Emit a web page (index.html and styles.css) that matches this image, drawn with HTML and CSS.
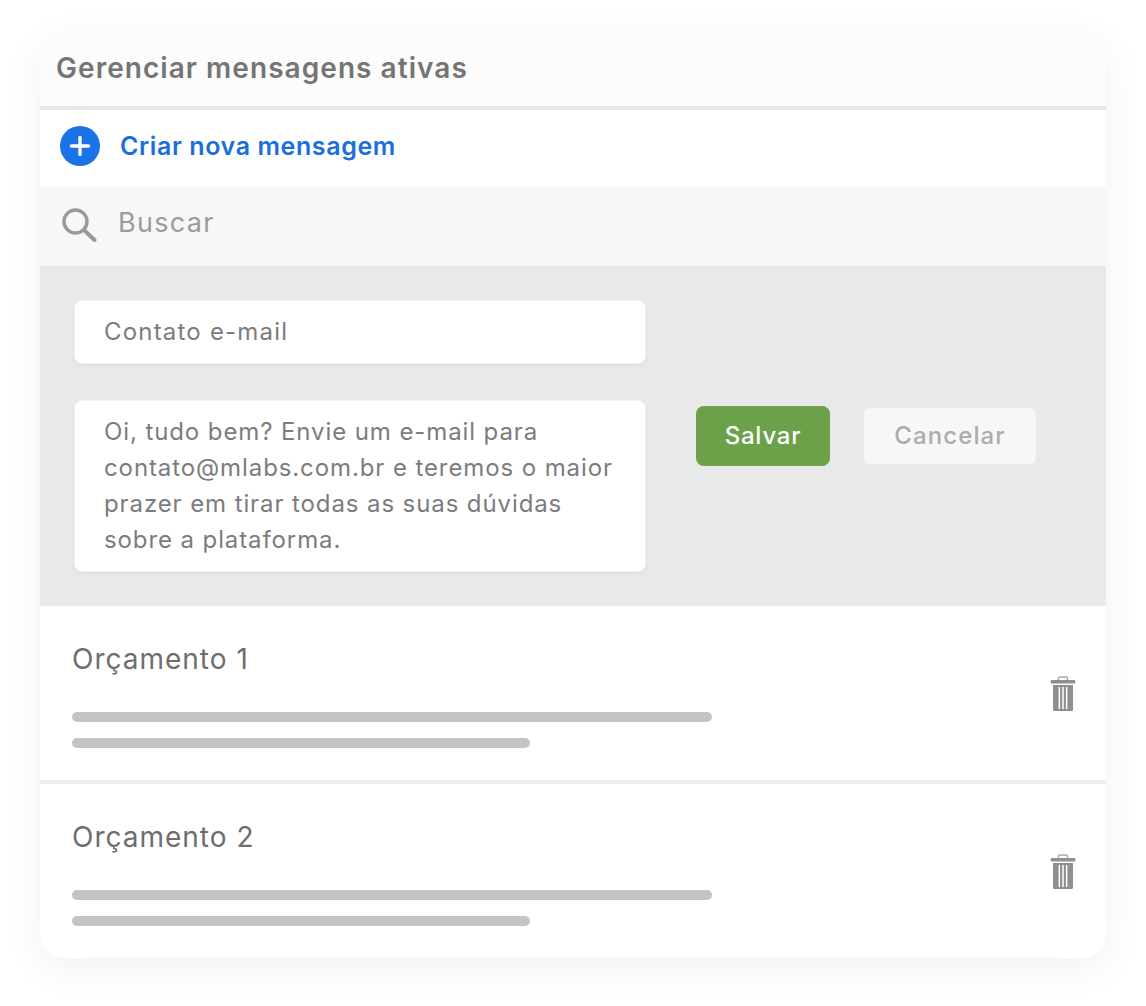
FILE: index.html
```html
<!DOCTYPE html>
<html lang="pt-BR">
<head>
  <meta charset="UTF-8">
  <title>Gerenciar mensagens ativas</title>
  <link rel="stylesheet" href="styles.css">
</head>
<body>
  <div class="card">
    <div class="card-title">Gerenciar mensagens ativas</div>
    <div class="create-row">
      <svg class="plus-icon" width="40" height="40" viewBox="0 0 40 40">
        <circle cx="20" cy="20" r="20" fill="#1a73e8"/>
        <path d="M20 11.5v17M11.5 20h17" stroke="#fff" stroke-width="3.4" stroke-linecap="round"/>
      </svg>
      <span class="create-label">Criar nova mensagem</span>
    </div>
    <div class="search-row">
      <svg class="search-icon" width="36" height="36" viewBox="0 0 36 36">
        <circle cx="14.5" cy="14.5" r="11.5" fill="none" stroke="#999" stroke-width="3.4"/>
        <path d="M23 23l10.5 10" stroke="#999" stroke-width="4" stroke-linecap="round"/>
      </svg>
      <span class="search-label">Buscar</span>
    </div>
    <div class="edit-panel">
      <div class="fields">
        <div class="field field-name">Contato e-mail</div>
        <div class="field field-body">Oi, tudo bem? Envie um e-mail para<br>contato@mlabs.com.br e teremos o maior<br>prazer em tirar todas as suas dúvidas<br>sobre a plataforma.</div>
      </div>
      <div class="actions">
        <button class="btn btn-save">Salvar</button>
        <button class="btn btn-cancel">Cancelar</button>
      </div>
    </div>
    <div class="message">
      <div class="message-text">
        <div class="message-name">Orçamento 1</div>
        <div class="line line-long"></div>
        <div class="line line-short"></div>
      </div>
      <svg class="trash-icon" width="26" height="36" viewBox="0 0 26 36">
        <path d="M8.500 4.500V2.500A1.500 1.500 0 0 1 10 1h6A1.500 1.500 0 0 1 17.500 2.500V4.500" fill="none" stroke="#a8a8a8" stroke-width="1.400"/>
        <rect x="0.500" y="4" width="25" height="3.600" rx="1.500" fill="#8f8f8f"/>
        <path fill="#8f8f8f" fill-rule="evenodd" d="M3 9h20V33.500a1.500 1.500 0 0 1-1.500 1.500H4.500A1.500 1.500 0 0 1 3 33.500ZM8.600 11v22h1.500V11ZM12.250 11v22h1.500V11ZM15.900 11v22h1.500V11Z"/>
      </svg>
    </div>
    <div class="message">
      <div class="message-text">
        <div class="message-name">Orçamento 2</div>
        <div class="line line-long"></div>
        <div class="line line-short"></div>
      </div>
      <svg class="trash-icon" width="26" height="36" viewBox="0 0 26 36">
        <path d="M8.500 4.500V2.500A1.500 1.500 0 0 1 10 1h6A1.500 1.500 0 0 1 17.500 2.500V4.500" fill="none" stroke="#a8a8a8" stroke-width="1.400"/>
        <rect x="0.500" y="4" width="25" height="3.600" rx="1.500" fill="#8f8f8f"/>
        <path fill="#8f8f8f" fill-rule="evenodd" d="M3 9h20V33.500a1.500 1.500 0 0 1-1.500 1.500H4.500A1.500 1.500 0 0 1 3 33.500ZM8.600 11v22h1.500V11ZM12.250 11v22h1.500V11ZM15.900 11v22h1.500V11Z"/>
      </svg>
    </div>
  </div>
</body>
</html>
```
FILE: styles.css
```css
* {
  box-sizing: border-box;
}
body {
  margin: 0;
  padding: 32px 40px 48px;
  background: #fff;
  font-family: Inter, "Liberation Sans", sans-serif;
}
.card {
  width: 1066px;
  height: 926px;
  background: #fff;
  border-radius: 24px;
  overflow: hidden;
  box-shadow: 0 10px 40px rgba(0,0,0,0.06);
}
.card-title {
  height: 78px;
  padding: 0 16px 2px;
  display: flex;
  align-items: center;
  background: #fcfcfc;
  border-bottom: 4px solid #e6e6e6;
  color: #757575;
  font-size: 28px;
  font-weight: 600;
  letter-spacing: 1.05px;
}
.create-row {
  height: 76px;
  padding: 0 20px 4px;
  display: flex;
  align-items: center;
  gap: 20px;
}
.create-label {
  color: #1a6fdc;
  font-size: 25px;
  font-weight: 600;
  letter-spacing: 0.6px;
}
.search-row {
  height: 80px;
  padding: 0 20px 2px 21px;
  display: flex;
  align-items: center;
  gap: 21px;
  background: #f7f7f7;
}
.search-label {
  padding-bottom: 6px;
  color: #9b9b9b;
  font-size: 27px;
  letter-spacing: 1.3px;
}
.edit-panel {
  height: 340px;
  padding: 34px;
  display: flex;
  background: #e8eaea;
}
.fields {
  width: 572px;
  display: flex;
  flex-direction: column;
  gap: 36px;
}
.field {
  padding: 0 29px;
  background: #fff;
  border: 1px solid #f3f4f4;
  border-radius: 8px;
  box-shadow: 0 1px 4px rgba(0,0,0,0.06);
  color: #7c7c7c;
  font-size: 24px;
  letter-spacing: 0.9px;
}
.field-name {
  height: 64px;
  line-height: 62px;
  letter-spacing: 1.2px;
}
.field-body {
  height: 172px;
  padding-top: 13px;
  line-height: 36px;
  white-space: nowrap;
}
.actions {
  margin: 106px 0 0 50px;
  height: 60px;
  display: flex;
  align-items: center;
  gap: 34px;
}
.btn {
  border: none;
  padding: 0 0 2px;
  font-family: inherit;
  font-size: 24px;
  font-weight: 500;
}
.btn-save {
  width: 134px;
  height: 60px;
  background: #6ba148;
  border-radius: 8px;
  color: #fff;
  letter-spacing: 0.8px;
}
.btn-cancel {
  width: 172px;
  height: 56px;
  background: #f7f7f7;
  border-radius: 6px;
  color: #acacac;
  letter-spacing: 1.1px;
}
.message {
  height: 174px;
  padding: 0 30px 0 32px;
  display: flex;
  align-items: center;
  justify-content: space-between;
}
.message + .message {
  height: 178px;
  border-top: 4px solid #eeeeee;
}
.message-text {
  width: 640px;
  height: 174px;
  padding-top: 32px;
}
.message-name {
  height: 42px;
  margin-bottom: 32px;
  line-height: 42px;
  color: #6e6e6e;
  font-size: 28px;
  letter-spacing: 1px;
}
.line {
  height: 10px;
  border-radius: 5px;
  background: #c4c4c4;
}
.line-long {
  width: 640px;
  margin-bottom: 16px;
}
.line-short {
  width: 458px;
}
.trash-icon {
  margin-top: 2px;
}
```
